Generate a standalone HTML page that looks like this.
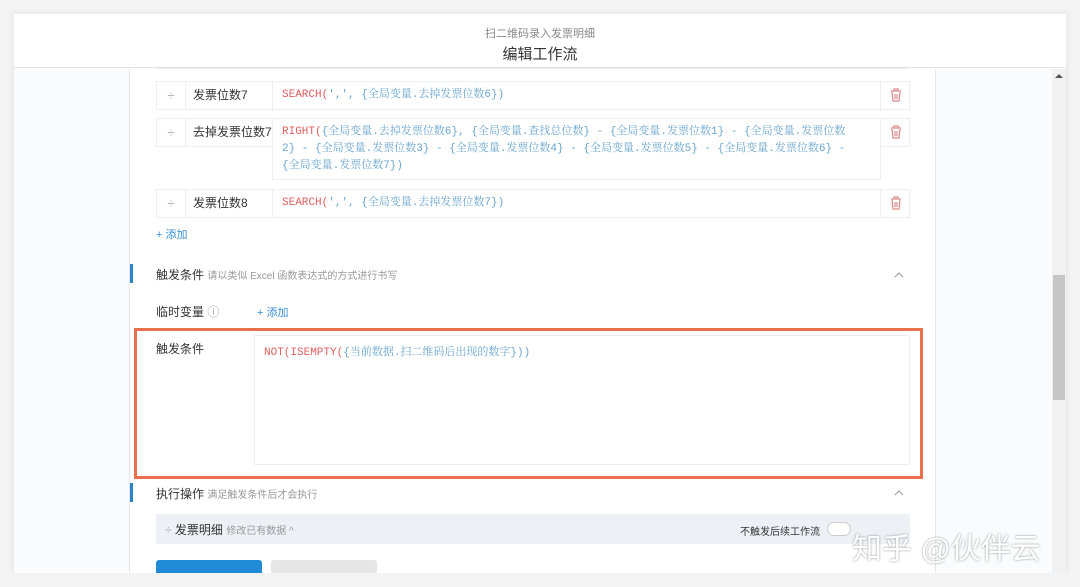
<!DOCTYPE html>
<html><head><meta charset="utf-8"><style>
*{box-sizing:border-box;margin:0;padding:0}
body{width:1080px;height:587px;background:#f3f3f3;font-family:"Liberation Sans","Noto Sans CJK SC",sans-serif;position:relative;overflow:hidden;color:#333}
.abs{position:absolute}
.card{left:14px;top:14px;width:1052px;height:559px;background:#fff;box-shadow:0 0 6px rgba(0,0,0,.08);overflow:hidden}
.hdr{left:0;top:0;width:1052px;height:54px;border-bottom:1px solid #e3e3e3;text-align:center}
.lp{left:0;top:55px;width:116px;height:510px;background:#fafbfc;border-right:1px solid #e6e6e6}
.rp{left:921px;top:55px;width:117px;height:510px;background:#fafbfc;border-left:1px solid #e6e6e6}
.sb{left:1038px;top:55px;width:14px;height:510px;background:#f1f1f1}
.cell{position:absolute;border:1px solid #eceef2;background:#fff;font-size:12px}
.mono{font-family:"Liberation Mono","Noto Serif CJK SC",monospace;font-size:11px;color:#e06060}
.b{color:#6aa6cf}
.drag{color:#aaa;text-align:center;font-size:13px}
</style></head><body>
<div class="abs card">
 <div class="abs hdr"><div style="font-size:11px;color:#888;margin-top:11px">扫二维码录入发票明细</div><div style="font-size:15px;color:#333;margin-top:2px">编辑工作流</div></div>
 <div class="abs lp"></div><div class="abs rp"></div>
 <div class="abs sb"><div class="abs" style="left:3px;top:5px;width:0;height:0;border-left:4px solid transparent;border-right:4px solid transparent;border-bottom:4px solid #555"></div><div class="abs" style="left:1px;top:206px;width:12px;height:125px;background:#c6c6c6"></div></div>
</div>
<div class="abs" style="left:156px;top:68px;width:754px;height:1px;background:#eceef2"></div>
<div class="cell drag" style="left:156px;top:81px;width:30px;height:29px;line-height:27px">÷</div>
<div class="cell" style="left:185px;top:81px;width:88px;height:29px;line-height:27px;padding-left:7px">发票位数7</div>
<div class="cell mono" style="left:272px;top:81px;width:609px;height:29px;line-height:27px;padding-left:9px">SEARCH(<span class="b">',', {全局变量.去掉发票位数6})</span></div>
<div class="cell" style="left:880px;top:81px;width:30px;height:29px"></div>
<div class="cell drag" style="left:156px;top:118px;width:30px;height:29px;line-height:27px">÷</div>
<div class="cell" style="left:185px;top:118px;width:88px;height:29px;line-height:27px;padding-left:7px;white-space:nowrap;overflow:hidden">去掉发票位数7</div>
<div class="cell mono" style="left:272px;top:118px;width:609px;height:62px;padding:5px 9px;line-height:17px;white-space:nowrap">RIGHT(<span class="b">{全局变量.去掉发票位数6}, {全局变量.查找总位数} - {全局变量.发票位数1} - {全局变量.发票位数<br>2} - {全局变量.发票位数3} - {全局变量.发票位数4} - {全局变量.发票位数5} - {全局变量.发票位数6} -<br>{全局变量.发票位数7})</span></div>
<div class="cell" style="left:880px;top:118px;width:30px;height:29px"></div>
<div class="cell drag" style="left:156px;top:189px;width:30px;height:29px;line-height:27px">÷</div>
<div class="cell" style="left:185px;top:189px;width:88px;height:29px;line-height:27px;padding-left:7px">发票位数8</div>
<div class="cell mono" style="left:272px;top:189px;width:609px;height:29px;line-height:27px;padding-left:9px">SEARCH(<span class="b">',', {全局变量.去掉发票位数7})</span></div>
<div class="cell" style="left:880px;top:189px;width:30px;height:29px"></div>
<svg class="abs" style="left:0;top:0" width="1080" height="587">
 <g fill="none" stroke="#d88" stroke-width="1.2">
  <path d="M891 91h10M894 91v-2h4v2M892 92l1 9h6l1-9M895 94v5M897 94v5"/>
  <path d="M891 128h10M894 128v-2h4v2M892 129l1 9h6l1-9M895 131v5M897 131v5"/>
  <path d="M891 199h10M894 199v-2h4v2M892 200l1 9h6l1-9M895 202v5M897 202v5"/>
 </g>
 <g fill="none" stroke="#999" stroke-width="1"><path d="M895 277l4-4 4 4M895 495l4-4 4 4"/></g>
</svg>
<div class="abs" style="left:156px;top:226px;font-size:11px;color:#3a8fd0">+ 添加</div>
<div class="abs" style="left:130px;top:264px;width:3px;height:19px;background:#2a84c8"></div>
<div class="abs" style="left:156px;top:266px;font-size:12px">触发条件 <span style="font-size:10px;color:#999">请以类似 Excel 函数表达式的方式进行书写</span></div>
<div class="abs" style="left:156px;top:303px;font-size:12px">临时变量 <span style="color:#999">ⓘ</span></div>
<div class="abs" style="left:257px;top:304px;font-size:11px;color:#3a8fd0">+ 添加</div>
<div class="abs" style="left:134px;top:328px;width:789px;height:151px;border:3px solid #e8704a"></div>
<div class="abs" style="left:156px;top:340px;font-size:12px">触发条件</div>
<div class="cell mono" style="left:254px;top:335px;width:656px;height:130px;padding:7px 9px">NOT(ISEMPTY(<span class="b">{当前数据.扫二维码后出现的数字}))</span></div>
<div class="abs" style="left:130px;top:483px;width:3px;height:19px;background:#2a84c8"></div>
<div class="abs" style="left:156px;top:485px;font-size:12px">执行操作 <span style="font-size:10px;color:#999">满足触发条件后才会执行</span></div>
<div class="abs" style="left:156px;top:514px;width:754px;height:30px;background:#edf1f6"></div>
<div class="abs" style="left:165px;top:521px;font-size:12px"><span style="color:#aaa">÷</span> 发票明细 <span style="font-size:10px;color:#999">修改已有数据 ^</span></div>
<div class="abs" style="left:740px;top:523px;font-size:10px">不触发后续工作流</div>
<div class="abs" style="left:827px;top:522px;width:24px;height:14px;border-radius:7px;border:1px solid #ccc;background:#fff"></div>
<div class="abs" style="left:156px;top:560px;width:106px;height:16px;background:#1f8ad6;border-radius:3px 3px 0 0"></div>
<div class="abs" style="left:271px;top:560px;width:106px;height:16px;background:#e6e6e6;border-radius:3px 3px 0 0"></div>
<div class="abs" style="left:0;top:573px;width:1080px;height:14px;background:#f3f3f3"></div>
<div class="abs" style="left:852px;top:524px;font-size:30px;color:#fff;text-shadow:0 0 2px rgba(0,0,0,.45);white-space:nowrap">知乎 @伙伴云</div>
</body></html>
